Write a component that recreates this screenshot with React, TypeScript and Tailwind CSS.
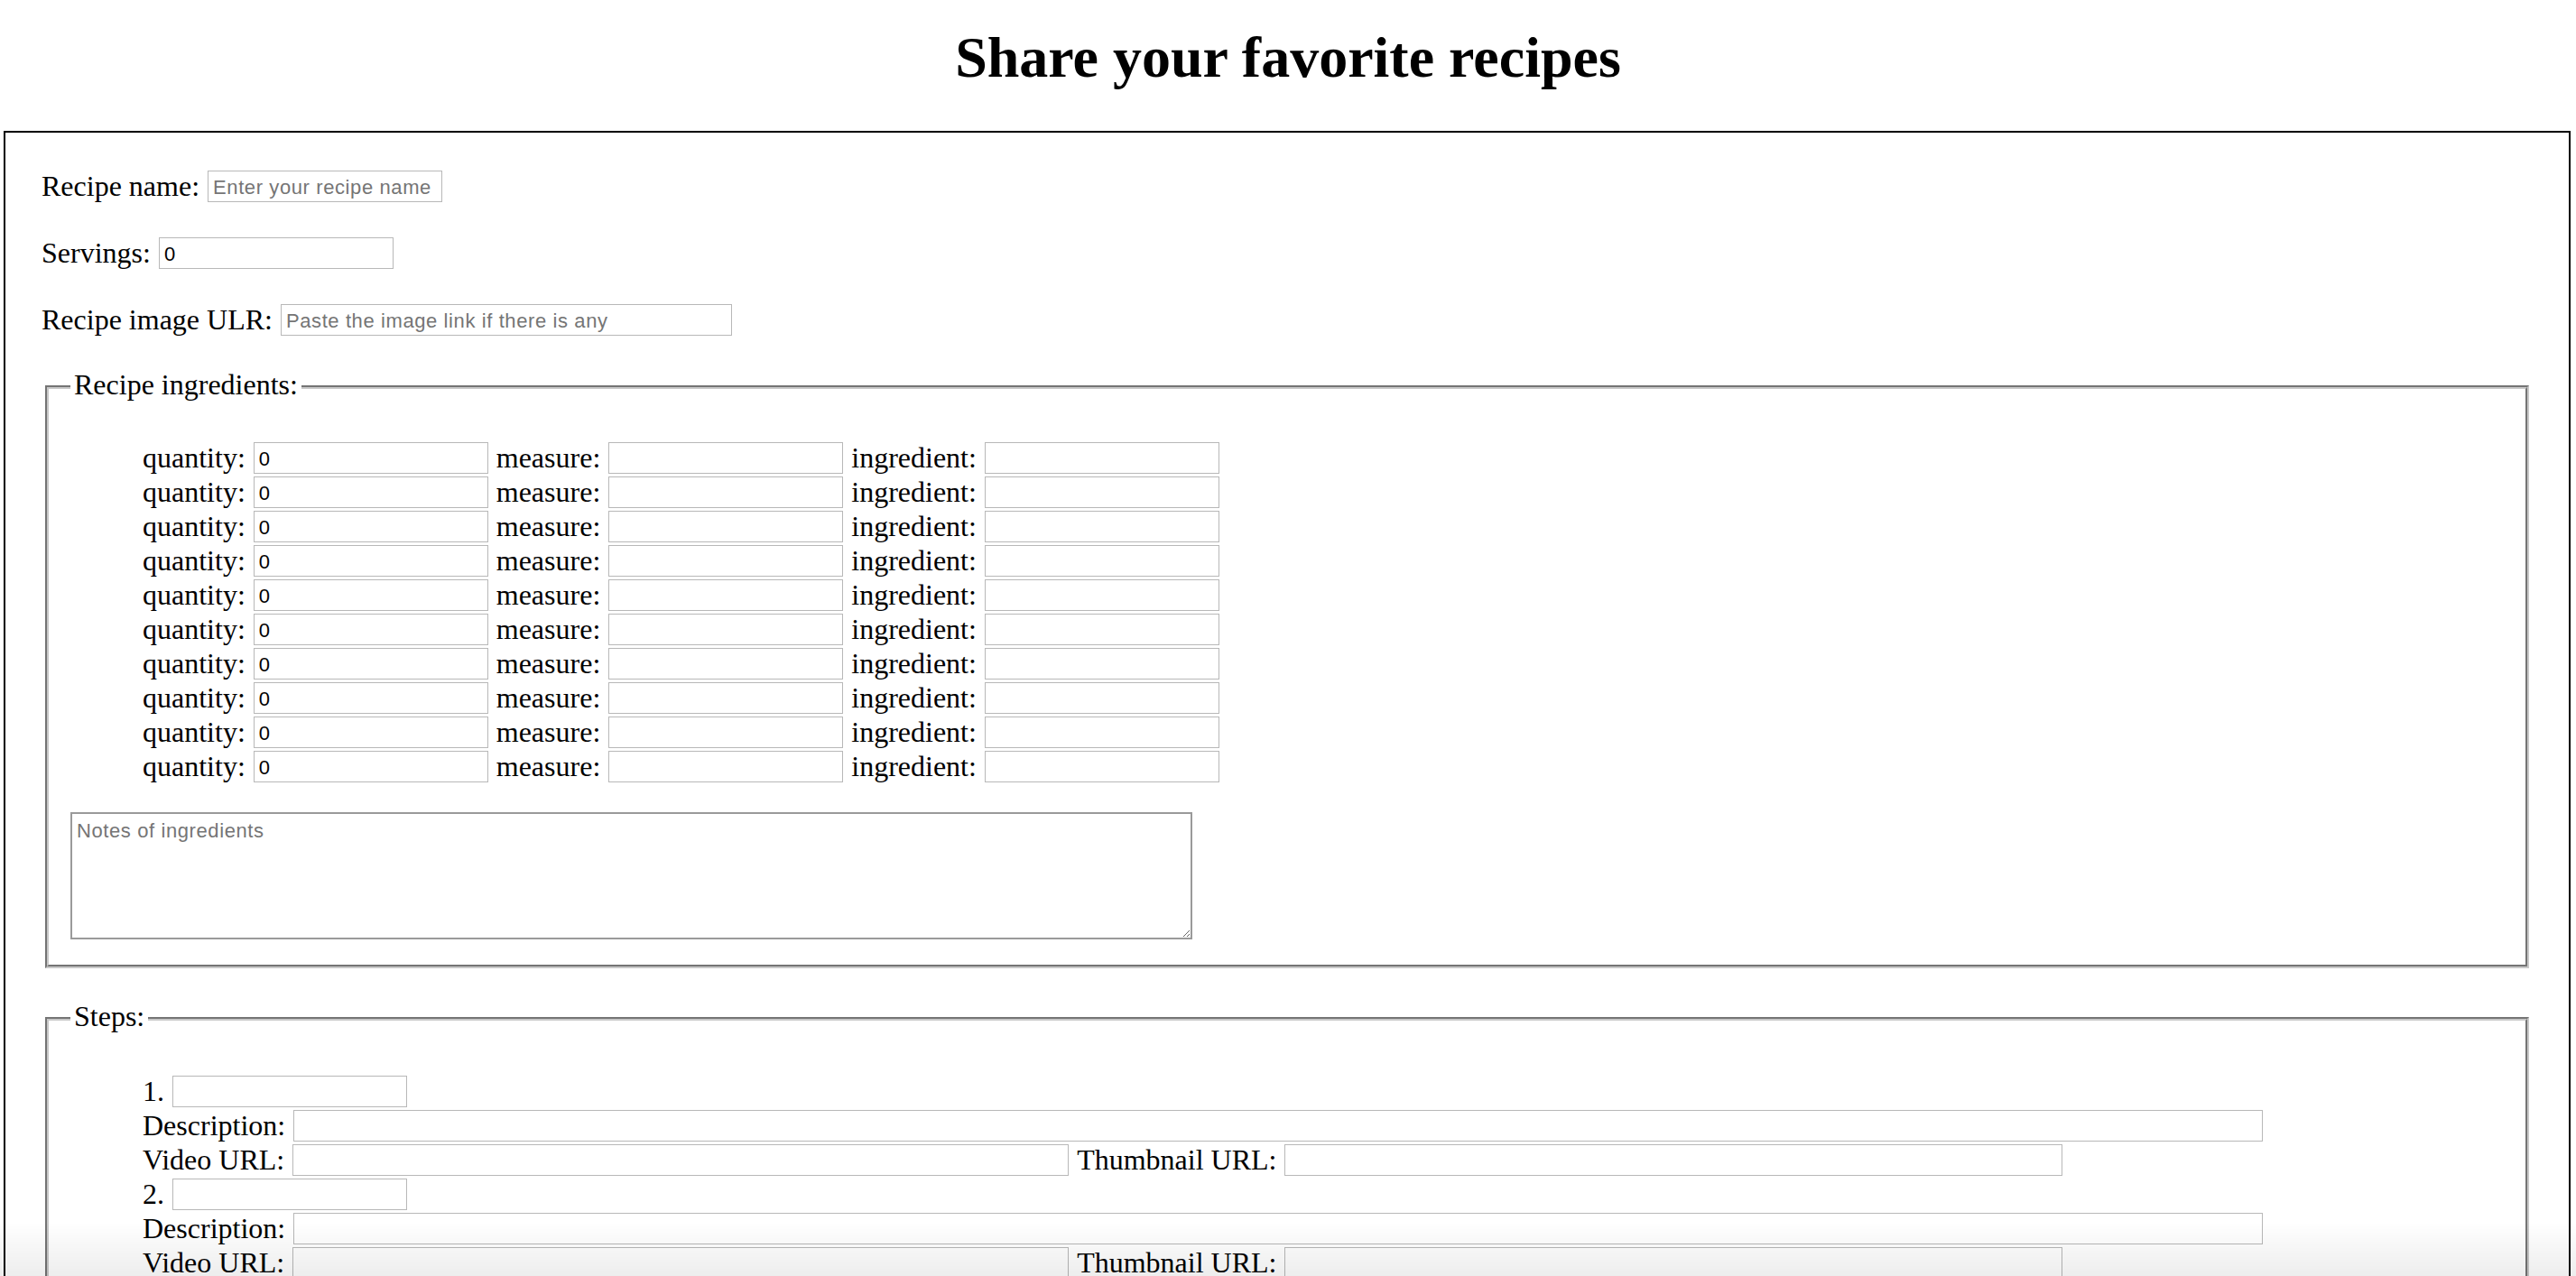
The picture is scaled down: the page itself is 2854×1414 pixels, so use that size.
import React from "react";

const field =
  "h-[35px] shrink-0 border border-[#b8b8b8] bg-white px-[5px] pt-[3px] font-['Liberation_Sans',Arial,sans-serif] text-[22px] leading-[normal] tracking-[0.6px] text-black outline-none placeholder:text-[#757575]";

const fieldset =
  "mx-[4px] mt-[35px] border-4 border-[#c8c8c8] [--tw-border-style:groove] [border-style:groove] px-[24px] pb-[28px]";

function Row({ children }: { children: React.ReactNode }) {
  return <div className="flex h-[38px] items-center gap-[9px] whitespace-nowrap">{children}</div>;
}

const ingredientRows = Array.from({ length: 10 }, (_, i) => i);
const steps = Array.from({ length: 10 }, (_, i) => i + 1);

export default function App() {
  return (
    <div className="h-screen overflow-hidden bg-white pt-[32px] font-['Liberation_Serif','Times_New_Roman',serif] text-[32px] leading-[normal] text-black">
      <h1 className="mb-[49px] text-center text-[64px] font-bold leading-[64px]">Share your favorite recipes</h1>

      <form className="ml-[4px] mr-[6px] border-2 border-black px-[40px] pt-[40px] pb-[40px]">
        <div className="flex flex-col gap-[36px]">
          <Row>
            <label>Recipe name:</label>
            <input className={`${field} w-[260px]`} placeholder="Enter your recipe name" />
          </Row>
          <Row>
            <label>Servings:</label>
            <input className={`${field} w-[260px]`} defaultValue="0" />
          </Row>
          <Row>
            <label>Recipe image ULR:</label>
            <input className={`${field} w-[500px]`} placeholder="Paste the image link if there is any" />
          </Row>
        </div>

        <fieldset className={fieldset}>
          <legend className="px-[4px] pb-[6px] leading-[36px]">Recipe ingredients:</legend>
          <div className="mt-[38px] ml-[80px]">
            {ingredientRows.map((i) => (
              <Row key={i}>
                <label>quantity:</label>
                <input className={`${field} w-[260px]`} defaultValue="0" />
                <label>measure:</label>
                <input className={`${field} w-[260px]`} />
                <label>ingredient:</label>
                <input className={`${field} w-[260px]`} />
              </Row>
            ))}
          </div>
          <textarea
            className="mt-[32px] block h-[141px] w-[1243px] border-2 border-[#9a9a9a] bg-white px-[5px] pt-[6px] font-['Liberation_Sans',Arial,sans-serif] text-[22px] leading-[normal] tracking-[0.6px] text-black outline-none placeholder:text-[#757575]"
            placeholder="Notes of ingredients"
          />
        </fieldset>

        <fieldset className={fieldset}>
          <legend className="px-[4px] pb-[6px] leading-[36px]">Steps:</legend>
          <div className="mt-[40px] ml-[80px]">
            {steps.map((n) => (
              <div key={n}>
                <Row>
                  <label>{n}.</label>
                  <input className={`${field} w-[260px]`} />
                </Row>
                <Row>
                  <label>Description:</label>
                  <input className={`${field} w-[2182px]`} />
                </Row>
                <Row>
                  <label>Video URL:</label>
                  <input className={`${field} w-[860px]`} />
                  <label>Thumbnail URL:</label>
                  <input className={`${field} w-[862px]`} />
                </Row>
              </div>
            ))}
          </div>
        </fieldset>
      </form>

      <div className="pointer-events-none fixed inset-x-0 bottom-0 h-[60px] bg-linear-to-b from-transparent to-black/[0.07]" />
    </div>
  );
}
